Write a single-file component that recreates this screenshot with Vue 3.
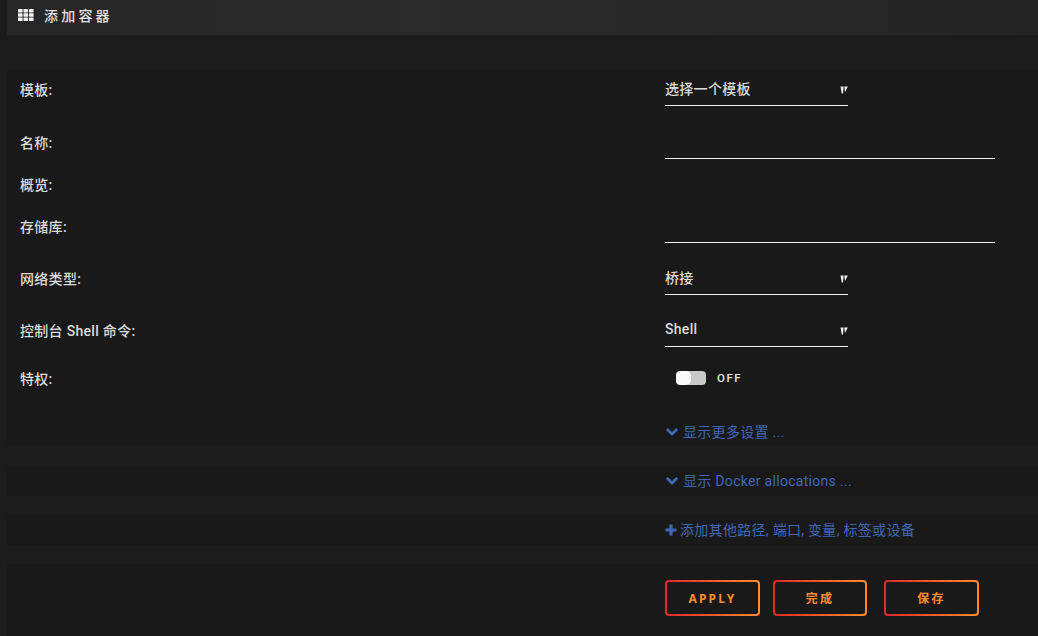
<script setup>
const rows = [
  { label: '模板:', kind: 'select', value: '选择一个模板', h: 36 },
  { label: '名称:', kind: 'input', h: 53 },
  { label: '概览:', kind: 'none', h: 42 },
  { label: '存储库:', kind: 'input', h: 42 },
  { label: '网络类型:', kind: 'select', value: '桥接', h: 52 },
  { label: '控制台 Shell 命令:', kind: 'select', value: 'Shell', h: 52 },
]
const buttons = [
  { text: 'APPLY', cls: 'btn-apply' },
  { text: '完成', cls: 'btn-done' },
  { text: '保存', cls: 'btn-save' },
]
</script>

<template>
  <div class="page">
    <header class="title">
      <svg class="grid-icon" width="16" height="12" viewBox="0 0 16 12">
        <g fill="#f2f2f2">
          <rect x="0" y="0" width="4.6" height="3.4" rx=".4" /><rect x="5.5" y="0" width="4.6" height="3.4" rx=".4" /><rect x="11" y="0" width="4.6" height="3.4" rx=".4" />
          <rect x="0" y="4.3" width="4.6" height="3.4" rx=".4" /><rect x="5.5" y="4.3" width="4.6" height="3.4" rx=".4" /><rect x="11" y="4.3" width="4.6" height="3.4" rx=".4" />
          <rect x="0" y="8.6" width="4.6" height="3.4" rx=".4" /><rect x="5.5" y="8.6" width="4.6" height="3.4" rx=".4" /><rect x="11" y="8.6" width="4.6" height="3.4" rx=".4" />
        </g>
      </svg>
      <span>添加容器</span>
    </header>

    <section class="panel main">
      <div v-for="r in rows" :key="r.label" class="row" :style="{ height: r.h + 'px' }">
        <div class="label">{{ r.label }}</div>
        <div v-if="r.kind === 'select'" class="select">
          <span>{{ r.value }}</span>
          <svg class="caret" width="8" height="8" viewBox="0 0 8 8">
            <path d="M0.5 0.5H3.6L3 7.5H1.8Z M4.3 0.5H7.8L5 6Z" fill="#f4f4f4" />
          </svg>
        </div>
        <div v-else-if="r.kind === 'input'" class="input"></div>
      </div>
      <div class="row toggle-row">
        <div class="label">特权:</div>
        <div class="toggle-wrap">
          <div class="toggle"><div class="knob"></div></div>
          <span class="off">OFF</span>
        </div>
      </div>
      <div class="row link-row first-link">
        <a class="link">
          <svg width="14" height="10" viewBox="0 0 14 10"><path d="M1.8 2 7 7l5.2-5" fill="none" stroke="#4168b4" stroke-width="2.8" /></svg>
          <span>显示更多设置 ...</span>
        </a>
      </div>
    </section>

    <section class="panel strip">
      <a class="link">
        <svg width="14" height="10" viewBox="0 0 14 10"><path d="M1.8 2 7 7l5.2-5" fill="none" stroke="#4168b4" stroke-width="2.8" /></svg>
        <span>显示 Docker allocations ...</span>
      </a>
    </section>

    <section class="panel strip">
      <a class="link plus">
        <svg width="12" height="12" viewBox="0 0 12 12"><path d="M6 .5v11M.5 6h11" stroke="#4168b4" stroke-width="3.2" fill="none" /></svg>
        <span>添加其他路径, 端口, 变量, 标签或设备</span>
      </a>
    </section>

    <section class="panel actions">
      <button v-for="b in buttons" :key="b.text" class="btn" :class="b.cls">{{ b.text }}</button>
    </section>
  </div>
</template>

<style>
html, body { margin: 0; background: #1c1c1c; }
</style>

<style scoped>
.page {
  width: 1038px;
  height: 636px;
  overflow: hidden;
  background: #1c1c1c;
  padding-left: 7px;
  box-sizing: border-box;
  font-family: Roboto, "Noto Sans CJK SC", sans-serif;
  font-size: 14px;
  letter-spacing: .3px;
  color: #dcdcdc;
}
.title {
  height: 35px;
  background: linear-gradient(90deg, #262626, #2a2a2a 40%, #242424);
  display: flex;
  align-items: center;
  padding: 0 0 6px 11px;
  box-sizing: border-box;
  font-size: 14px;
  font-weight: 500;
  letter-spacing: 3.2px;
  color: #e0e0e0;
}
.grid-icon { margin-right: 10px; flex: none; }
.panel { background: #191919; }
.main { margin-top: 35px; height: 376px; padding-left: 13px; }
.row { display: flex; align-items: flex-end; position: relative; box-sizing: border-box; }
.label {
  width: 645px;
  flex: none;
  font-weight: 500;
  line-height: 20px;
  padding-bottom: 6px;
}
.select {
  width: 183px;
  height: 32px;
  box-sizing: border-box;
  border-bottom: 1px solid #f0f0f0;
  display: flex;
  align-items: center;
  justify-content: space-between;
  font-weight: 500;
  padding-bottom: 4px;
}
.caret { margin-top: 5px; }
.input { width: 330px; height: 32px; box-sizing: border-box; border-bottom: 1px solid #f0f0f0; }
.toggle-row { height: 48px; }
.toggle-wrap { display: flex; align-items: center; margin-left: 11px; height: 32px; padding-bottom: 2px; box-sizing: border-box; }
.toggle {
  width: 30px;
  height: 14px;
  border-radius: 4px;
  background: #c9c9c9;
  position: relative;
}
.knob {
  position: absolute;
  left: 0;
  top: 0;
  width: 15px;
  height: 14px;
  border-radius: 5px;
  background: #fafafa;
}
.off {
  margin-left: 11px;
  font-size: 11.5px;
  font-weight: 500;
  letter-spacing: 1.5px;
  color: #e8e8e8;
}
.link-row { padding-left: 645px; height: 51px; align-items: flex-start; padding-top: 27px; }
.link {
  color: #4168b4;
  display: inline-flex;
  align-items: center;
  gap: 4px;
  line-height: 20px;
  white-space: pre;
}
.plus { gap: 3px; }
.strip {
  margin-top: 20px;
  height: 30px;
  padding-left: 658px;
  display: flex;
  align-items: center;
}
.strip + .strip { margin-top: 19px; }
.actions {
  margin-top: 19px;
  height: 72px;
  padding-left: 658px;
  padding-top: 16px;
  box-sizing: border-box;
  display: flex;
  align-items: flex-start;
}
.btn {
  height: 36px;
  border: 2px solid transparent;
  border-radius: 4px;
  background:
    linear-gradient(#191919, #191919) padding-box,
    linear-gradient(90deg, #e22828, #ff8c2f) border-box;
  color: #ff8c2f;
  font: 700 12px "Noto Sans", "Noto Sans CJK SC", sans-serif;
  letter-spacing: 2.2px;
  padding: 0;
}
.btn-apply { width: 95px; }
.btn-done { width: 94px; margin-left: 13px; }
.btn-save { width: 95px; margin-left: 17px; }
</style>
